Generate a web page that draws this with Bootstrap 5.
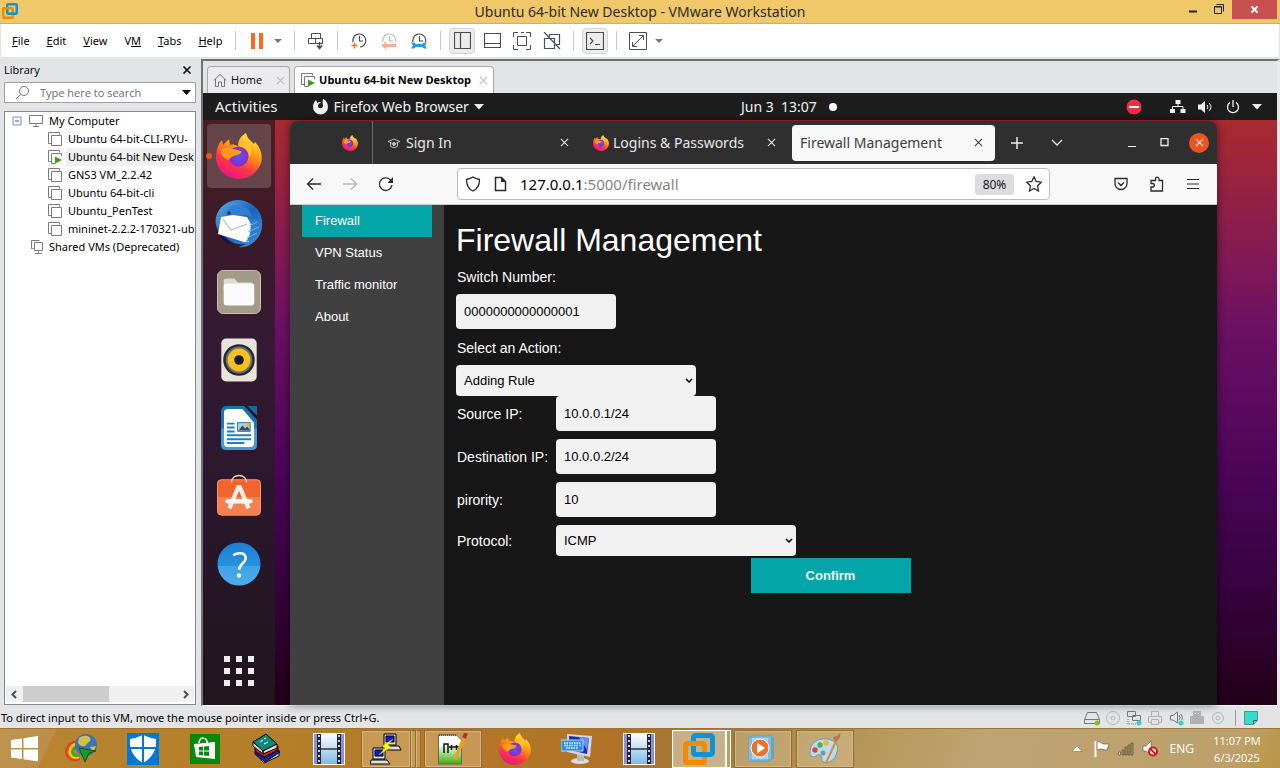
<!DOCTYPE html>
<html lang="en">
<head>
<meta charset="utf-8">
<meta name="viewport" content="width=device-width, initial-scale=1">
<title>Ubuntu 64-bit New Desktop - VMware Workstation</title>
<link href="https://cdn.jsdelivr.net/npm/bootstrap@5.3.0/dist/css/bootstrap.min.css" rel="stylesheet">
<style>
:root{--ui:"Open Sans","Noto Sans",sans-serif;--gnome:"Noto Sans","Open Sans",sans-serif;--web:"Liberation Sans",Arial,sans-serif}
body{font-family:var(--ui);font-size:11px;line-height:16px;color:#000;background:#e3e4e6}
button{border:0;background:none;padding:0;color:inherit;font:inherit}
svg{display:block;flex:none}
.shell{min-height:100vh}
.titlebar{height:24px;background:#f0c869;border-bottom:1px solid #cfae62;color:#2b2b2b;font:14px/23px var(--gnome)}
.win-btn{width:26px;height:19px}
.win-close{width:45px;height:19px;background:#c75050;margin-right:3px}
.menubar{height:34px;background:#fff;border:1px solid #e3e4e6;border-top:0;padding-left:11px;font-family:var(--gnome)}
.menu-item{margin-right:17px}
.menu-item.last{margin-right:7px}
.vsep{width:1px;height:19px;background:#c8c8c8;margin:0 6px}
.tool{width:30px;height:28px}
.tool.on{width:26px;height:26px;margin:0 2px;background:#ececed;border:1px solid #d4d4d4;border-radius:4px}
.caret{width:0;height:0;border:4px solid transparent;border-top-color:#777;border-bottom:0;margin:0 6px 0 2px}
.library{width:201px;padding:4px 5px 3px 4px}
.search-box{height:21px;border:1px solid #a0a0a0;background:#fff}
.search-box input{border:0;outline:0;min-width:0;font-size:11px;color:#6d6d6d;padding:0}
.search-box input::placeholder{color:#6d6d6d;opacity:1}
.tree{border:1px solid #828790;background:#fff;font-family:var(--gnome)}
.tree li{height:18px;white-space:nowrap}
.tree .guest{padding-left:43px}
.tree .nm{padding-left:2px;line-height:18px}
.tree .sel{background:#f0f0f0}
.twisty{margin:0 6px 0 7px}
.shared-icon{margin:0 6px 0 2px}
.hbar{height:16px;background:#f0f0f0;margin:0 1px 2px}
.hthumb{height:16px;width:46%;background:#cdcdcd}
.console{border-left:2px solid #6f7173;border-top:2px solid #6f7173;border-right:3px solid #e8e9ea;border-bottom:1px solid #fff;margin:1px 0 2px}
.vmtabs{height:32px;padding:5px 4px 0}
.vmtab{height:27px;border:1px solid #a8a8ac;border-bottom:0;border-radius:4px 4px 0 0;background:#ebebed;padding:0 4px 0 5px}
.vmtab .gap-name{margin:0 14px 0 4px}
.vmtab.on{background:#fff;font-weight:700;padding:0 5px 0 6px}
.topbar{height:27px;background:#1d1d1d;color:#f2f2f2;font:14px/27px var(--gnome);padding:0 15px 0 12px}
.activities{font-size:15px}
.app-menu{margin-left:34px;gap:5px}
.date-menu{margin-right:32px}
.indicators{gap:12px}
.desktop{background:linear-gradient(180deg,#aa2a2e 0,#8f1f49 16%,#6b1065 36%,#4a0456 62%,#3b0345 76%,#220018 100%)}
.dock{width:72px;background:linear-gradient(180deg,#4a1f23 0,#3c1a28 18%,#351a33 38%,#2a172c 65%,#21151d 100%);padding:4px 0 2px}
.dock-btn{width:64px;height:64px;margin-bottom:4px;border-radius:4px}
.dock-btn:last-child{margin-bottom:0}
.dock-btn.on{background:#65454a}
.run-dot{left:-1px;top:29px;width:6px;height:6px;border-radius:50%;background:#e95420}
.browser{margin:1px 60px 0 15px;border-radius:8px 8px 0 0;overflow:hidden;box-shadow:0 0 8px rgba(0,0,0,.5)}
.tabbar{height:43px;background:#302f30;color:#e8e8e8;font:14px/20px var(--gnome)}
.pin{width:83px;border-right:1px solid #6a696a;padding-right:14px;margin-right:1px}
.btab{flex:0 1 203px;height:36px;border-radius:4px;padding:0 8px;margin-left:4px}
.btab.on{background:#f8f8f8;color:#3d3d3d}
.wctl{gap:20px}
.quit{width:20px;height:20px;border-radius:50%;background:#e95420}
.navbar-ff{height:41px;background:#f8f8f8;border-bottom:1px solid #ccc;padding:0 6px;color:#2a2a2e}
.nb{width:36px;height:36px}
.urlbox{height:32px;border:1px solid #bcbcbc;border-radius:4px;background:#fff;margin:0 53px;padding:0 7px;gap:12px;font:15px/20px var(--gnome);color:#858585}
.zoom{height:21px;border-radius:3px;background:#dcdcde;font:12px/21px var(--gnome);color:#15141a;width:39px}
.page{background:#171717;color:#fff;font:14px/20px var(--web)}
.sidenav{width:154px;background:#404040;padding:0 12px;font-size:13px}
.sidenav a{height:32px;line-height:32px;padding-left:13px;color:#fff;text-decoration:none}
.sidenav a.on{background:#04a5a8}
.content-pane{padding:16px 12px}
.content-pane h1{font-size:32px;line-height:38px;margin:0 0 8px;font-weight:400}
.content-pane label{padding-left:1px}
.content-pane .top-label{display:block;margin-bottom:7px}
.fld{height:35px;width:160px;border:0;border-radius:4px;background:#f1f1f1;color:#000;font:13px/16px var(--web);padding:0 8px}
.switch-no{margin-bottom:9px}
select.fld{height:31px;width:240px;appearance:none;background:#f1f1f1 url("data:image/svg+xml,%3Csvg xmlns='http://www.w3.org/2000/svg' width='8' height='6'%3E%3Cpath d='M1 1l3 3 3-3' fill='none' stroke='%23000' stroke-width='1.5'/%3E%3C/svg%3E") no-repeat right 3px center}
.frow{margin-bottom:8px}
.frow.last{margin-bottom:2px}
.frow label{width:100px}
.confirm{width:160px;height:35px;background:#04a5a8;color:#f1f1f1;font:700 13px/35px var(--web)}
.statusbar{height:20px;padding:0 22px 0 1px;font-family:var(--gnome)}
.statusbar .vsep{height:16px;background:#999;margin:0 4px}
.taskbar{height:40px;color:#fff;border-top:1px solid #9d7434;background:linear-gradient(115deg,#bd9450 0,#bb8f48 50px,#b8842e 52px,#b47c28 340px,#b07228 570px,#9f7f40 660px,#b7995c 800px,#bda474 900px,#bda06a 1130px,#b9933f 1180px,#c59a30 1200px,#b98b28 100%)}
.start{width:50px}
.slot{width:62px;height:39px}
.tile{width:58px;height:38px;border:1px solid #8f6d34;box-shadow:inset 0 0 0 1px #d6b67e;background:rgba(255,235,200,.28)}
.tile.stack{width:50px}
.tile.focus-win{border-color:#fff;background:rgba(255,255,255,.4);width:54px}
.leaf{width:5px;height:38px;border:1px solid #8f6d34;border-left-color:#d6b67e;background:rgba(255,235,200,.28)}
.leaf.w{border-color:#fff}
.lang{font-size:12px;margin:0 12px 0 11px}
.clock{width:62px;line-height:17px;font-size:11px;margin-right:12px}
</style>
</head>
<body>
<svg width="0" height="0" class="position-absolute" aria-hidden="true">
<defs>
<linearGradient id="gFox" x1=".8" y1="0" x2=".3" y2="1"><stop offset="0" stop-color="#fff44f"/><stop offset=".4" stop-color="#ff980e"/><stop offset=".7" stop-color="#ff3647"/><stop offset="1" stop-color="#e31587"/></linearGradient>
<radialGradient id="gGlobe"><stop offset="0" stop-color="#5b56e8"/><stop offset="1" stop-color="#8a2bd0"/></radialGradient>
<linearGradient id="gBlue" x1="0" y1="0" x2="0" y2="1"><stop offset="0" stop-color="#1d7fd4"/><stop offset=".54" stop-color="#2790e0"/><stop offset=".55" stop-color="#3fa2e4"/><stop offset="1" stop-color="#4cacea"/></linearGradient>
<linearGradient id="gSky" x1="0" y1="0" x2="1" y2="1"><stop offset="0" stop-color="#5bb0ea"/><stop offset=".5" stop-color="#1b62bd"/><stop offset="1" stop-color="#3d9bdf"/></linearGradient>
<linearGradient id="gFilm" x1="0" y1="0" x2="0" y2="1"><stop offset="0" stop-color="#fff"/><stop offset="1" stop-color="#80b8e8"/></linearGradient>
<linearGradient id="gNote" x1="0" y1="0" x2="0" y2="1"><stop offset=".3" stop-color="#fff"/><stop offset="1" stop-color="#3fae10"/></linearGradient>
<symbol id="fox" viewBox="0 0 46 46"><path d="M30 0c1 5 5 8 8 11l1-2c6 6 8 14 6 21-3 9-12 16-22 16C10 46 0 36 0 24c0-6 2-13 6-17l1 5 6-6 1 6c3-1 5 0 8 1 0-6 3-10 8-13z" fill="url(#gFox)"/><circle cx="22.500" cy="23.500" r="10" fill="url(#gGlobe)"/><path d="M5 17c4-3 8-3 12-1 3 1 6 1 8 2 1 3-4 4-7 5-3 1-4 2-5 4-4-1-8-4-8-10z" fill="#ff9a1c"/><path d="M24 14c6 0 9 4 9 10 3-4 3-8 1-12-3-3-10-3-10 2z" fill="#ffc42a" opacity=".85"/></symbol>
<symbol id="vm" viewBox="0 0 14 14"><path d="M3.500 11.500H.5V.5H11.500v2M3.500 3.500h10v10h-10z" fill="none" stroke="#7b7b7b"/></symbol>
<symbol id="vmon" viewBox="0 0 14 14"><path d="M3.500 11.500H.5V.5H11.500v2M13.500 6V3.500h-10v10h4" fill="none" stroke="#7b7b7b"/><path d="M7 6.500v7l7-3.500z" fill="#3f9c12"/></symbol>
<symbol id="vmw" viewBox="0 0 32 32"><rect x="10.500" y="2.500" width="19" height="19" rx="2" fill="none" stroke="#0f93d2" stroke-width="5"/><rect x="2.500" y="10.500" width="19" height="19" rx="2" fill="none" stroke="#f38b00" stroke-width="5"/><path d="M15 21.500h12" fill="none" stroke="#0f93d2" stroke-width="5"/></symbol>
<symbol id="x10" viewBox="0 0 10 10"><path d="M1 1l8 8M9 1L1 9" fill="none" stroke="currentColor" stroke-width="1.200"/></symbol>
<symbol id="film" viewBox="0 0 32 32"><path d="M0 0h32v32H0z" fill="#fff"/><path d="M1 1h30v30H1z" fill="#8d8ee0"/><path d="M4 1h24v30H4z" fill="#26282c"/><path d="M8 1h16v30H8z" fill="url(#gFilm)"/><path d="M8 16h16" stroke="#333" stroke-width="1.500"/><path d="M6 2v29M26 2v29" stroke="#cfd4dc" stroke-width="2" stroke-dasharray="2 3"/></symbol>
<symbol id="clk" viewBox="0 0 18 18"><path d="M3.500 11.500A6.500 6.500 0 1 1 10 15M9.500 4v5H13" fill="none" stroke="currentColor" stroke-width="1.200"/></symbol>
</defs></svg>

<div class="shell d-flex flex-column">
<header class="titlebar position-relative text-center">
  <svg class="position-absolute" style="left:2px;top:3px" width="16" height="16"><use href="#vmw"/></svg>
  <span>Ubuntu 64-bit New Desktop - VMware Workstation</span>
  <div class="d-flex position-absolute end-0 top-0">
    <button class="win-btn d-flex justify-content-center" aria-label="Minimize"><svg width="10" height="14"><path d="M1 11.500h8" stroke="#222" stroke-width="2"/></svg></button>
    <button class="win-btn d-flex justify-content-center" aria-label="Restore"><svg width="12" height="15"><path d="M1.500 7v6.500h7v-7h-7zM1 7h8M3.500 4.500h7v7" fill="none" stroke="#222"/></svg></button>
    <button class="win-close d-flex justify-content-center align-items-center" aria-label="Close"><svg width="9" height="9"><path d="M1.500 1.500l6 6M7.500 1.500l-6 6" stroke="#fff" stroke-width="2"/></svg></button>
  </div>
</header>

<nav class="menubar d-flex align-items-center" aria-label="Menu">
  <button class="menu-item"><u>F</u>ile</button><button class="menu-item"><u>E</u>dit</button><button class="menu-item"><u>V</u>iew</button><button class="menu-item">V<u>M</u></button><button class="menu-item"><u>T</u>abs</button><button class="menu-item last"><u>H</u>elp</button>
  <span class="vsep"></span>
  <button class="tool d-flex justify-content-center align-items-center" aria-label="Suspend"><svg width="12" height="16"><path d="M0 0h4v16H0zM8 0h4v16H8z" fill="#ff6a1a"/></svg></button>
  <span class="caret"></span><span class="vsep"></span>
  <button class="tool d-flex justify-content-center align-items-center" aria-label="Send keys"><svg width="18" height="18" fill="none" stroke="#4c4c4c"><path d="M4.500 1.500h9v5h-9zM1.500 6.500h7v5h-7zM8.500 6.500h7v5h-7z"/><path d="M12.500 10v6M10 13.500l2.500 3 2.500-3" stroke-width="1.500"/></svg></button>
  <span class="vsep"></span>
  <button class="tool d-flex justify-content-center align-items-center" aria-label="Take snapshot"><svg width="18" height="18"><use href="#clk" color="#4c4c4c"/><path d="M4.500 10v7M1 13.500h7" stroke="#fff" stroke-width="4"/><path d="M4.500 10.500v6M1.500 13.500h6" stroke="#ff6a1a" stroke-width="1.300"/></svg></button>
  <button class="tool d-flex justify-content-center align-items-center" aria-label="Revert"><svg width="18" height="18"><use href="#clk" color="#bbb"/><path d="M0 10h17v7H0z" fill="#fff"/><path d="M1 13.500l5-4v2.500h10v3H6v2.500z" fill="#ffae8c"/></svg></button>
  <button class="tool d-flex justify-content-center align-items-center" aria-label="Manage snapshots"><svg width="18" height="18"><use href="#clk" color="#4c4c4c"/><path d="M0 10h18v8H0z" fill="#fff"/><path d="M1 10.500h3l2 1.500h6l2-1.500h3l-2 3 2 3h-3L12 15H6l-2 1.500H1l2-3z" fill="#2a9bdc"/></svg></button>
  <span class="vsep"></span>
  <button class="tool on d-flex justify-content-center align-items-center" aria-label="Show library"><svg width="17" height="17" fill="none" stroke="#4c4c4c"><path d="M.5.500h16v16H.5zM6.500.5v16" stroke-width="1.200"/></svg></button>
  <button class="tool d-flex justify-content-center align-items-center" aria-label="Thumbnail bar"><svg width="17" height="17" fill="none" stroke="#4c4c4c" stroke-width="1.200"><path d="M.5 1.500h16v14H.5zM.5 11.500h16"/></svg></button>
  <button class="tool d-flex justify-content-center align-items-center" aria-label="Full screen"><svg width="18" height="18" fill="none" stroke="#4c4c4c"><path d="M.5 5V.5H5M8 .5h3M13 .5h4.500V5M17.500 13v4.500H13M5 17.500H.5V13M4.500 4.500h9v9h-9z"/></svg></button>
  <button class="tool d-flex justify-content-center align-items-center" aria-label="Unity"><svg width="18" height="18" fill="none" stroke="#44525c"><path d="M6.500 5V2.500h10v10H13M1.500 6.500h10v10h-10zM1 0l16 17" stroke-width="1.200"/></svg></button>
  <span class="vsep"></span>
  <button class="tool on d-flex justify-content-center align-items-center" aria-label="Console view"><svg width="18" height="18" fill="none" stroke="#4c4c4c" stroke-width="1.200"><path d="M.5.500h17v17H.5zM4 6l3 3-3 3M9 12.500h5"/></svg></button>
  <span class="vsep"></span>
  <button class="tool d-flex justify-content-center align-items-center" aria-label="Stretch guest"><svg width="18" height="18" fill="none" stroke="#4c4c4c"><path d="M.5.500h17v17H.5zM4 14L14 4M10 3.500h4.500V8M3.500 10v4.500H8"/></svg></button>
  <span class="caret"></span>
</nav>

<div class="flex-fill d-flex">
  <aside class="library d-flex flex-column flex-shrink-0">
    <div class="d-flex justify-content-between align-items-center mb-1 pe-1"><span>Library</span><button aria-label="Close library"><svg width="10" height="10"><path d="M1.500 1.500l7 7M8.500 1.500l-7 7" stroke="#000" stroke-width="1.500"/></svg></button></div>
    <div class="search-box d-flex align-items-center">
      <svg class="mx-2" width="19" height="14" fill="none" stroke="#777"><circle cx="11" cy="5" r="4.500"/><path d="M7.500 8.500L3 13"/></svg>
      <input class="flex-fill" type="search" placeholder="Type here to search" aria-label="Search library">
      <svg class="me-1" width="9" height="6"><path d="M0 0h9L4.500 5z" fill="#000"/></svg>
    </div>
    <div class="tree mt-2 flex-fill d-flex flex-column">
      <ul class="list-unstyled mb-auto">
        <li class="d-flex align-items-center"><svg class="twisty" width="10" height="10"><path d="M1 1h8v8H1z" fill="#f4f6f8" stroke="#8a95a0"/><path d="M3 5h4" stroke="#3a57a0"/></svg><svg class="me-1" width="15" height="12" fill="none" stroke="#7b7b7b"><path d="M1.500.5h13v8h-13zM8 9v2M5 11.500h6"/></svg><span class="nm">My Computer</span></li>
        <li class="guest d-flex align-items-center"><svg class="me-1" width="14" height="14"><use href="#vm"/></svg><span class="nm">Ubuntu 64-bit-CLI-RYU-</span></li>
        <li class="guest d-flex align-items-center"><svg class="me-1" width="14" height="14"><use href="#vmon"/></svg><span class="nm sel flex-fill">Ubuntu 64-bit New Desk</span></li>
        <li class="guest d-flex align-items-center"><svg class="me-1" width="14" height="14"><use href="#vm"/></svg><span class="nm">GNS3 VM_2.2.42</span></li>
        <li class="guest d-flex align-items-center"><svg class="me-1" width="14" height="14"><use href="#vm"/></svg><span class="nm">Ubuntu 64-bit-cli</span></li>
        <li class="guest d-flex align-items-center"><svg class="me-1" width="14" height="14"><use href="#vm"/></svg><span class="nm">Ubuntu_PenTest</span></li>
        <li class="guest d-flex align-items-center"><svg class="me-1" width="14" height="14"><use href="#vm"/></svg><span class="nm">mininet-2.2.2-170321-ub</span></li>
        <li class="d-flex align-items-center ps-4"><svg class="shared-icon" width="12" height="14" fill="none" stroke="#7b7b7b"><path d="M2.500 8.500h-2v-8h8M3.500 2.500h8v8h-8zM7.500 11v2M4 13.500h7"/></svg><span class="nm ps-0">Shared VMs (Deprecated)</span></li>
      </ul>
      <div class="hbar d-flex align-items-center">
        <svg class="mx-1" width="9" height="9"><path d="M6 1L2.500 4.500 6 8" fill="none" stroke="#505050" stroke-width="2"/></svg><div class="hthumb"></div><svg class="ms-auto me-1" width="9" height="9"><path d="M3 1l3.500 3.500L3 8" fill="none" stroke="#505050" stroke-width="2"/></svg>
      </div>
    </div>
  </aside>

  <main class="console flex-fill d-flex flex-column">
    <div class="vmtabs d-flex">
      <button class="vmtab d-flex align-items-center"><svg width="14" height="14" fill="none" stroke="#777"><path d="M.7 7.500L7 1.500l6.300 6M2.500 6v7.500h3V9h3v4.500h3V6"/></svg><span class="gap-name">Home</span><svg width="9" height="9" color="#bbb"><use href="#x10"/></svg></button>
      <button class="vmtab on d-flex align-items-center ms-1"><svg width="14" height="14"><use href="#vmon"/></svg><span class="mx-1 pe-1">Ubuntu 64-bit New Desktop</span><svg width="9" height="9" color="#bbb"><use href="#x10"/></svg></button>
    </div>
    <div class="topbar d-flex align-items-center">
      <span class="me-auto d-flex align-items-center"><button class="activities">Activities</button>
      <button class="app-menu d-flex align-items-center"><svg width="17" height="17"><path d="M4 2l1.500 3C7 3.500 8 4 9 5c-2 0-3 1-3 3 0 3 5 3 5 0 0-2-1-3 0-7 3 1 5 4 5 8a7 7 0 0 1-15 0c0-3 1-5 3-7z" fill="#eee"/></svg><span>Firefox Web Browser</span><svg width="10" height="6"><path d="M0 0h10L5 5.500z" fill="#eee"/></svg></button></span>
      <button class="date-menu d-flex align-items-center"><span class="me-1">Jun 3&nbsp; 13:07</span><svg class="ms-2" width="8" height="8"><circle cx="4" cy="4" r="4" fill="#fff"/></svg></button>
      <span class="indicators ms-auto d-flex align-items-center">
        <svg class="me-3" width="16" height="16"><circle cx="8" cy="8" r="7.500" fill="#f22c45"/><path d="M3 8h10" stroke="#fff" stroke-width="2"/></svg>
        <svg width="16" height="14"><path d="M5.500 0h5v4h-5zM0 9h5v4H0zM10.500 9h5v4h-5z" fill="#f2f2f2"/><path d="M8 4v3M2.500 9V6.500h10.500V9" fill="none" stroke="#f2f2f2"/></svg>
        <svg width="16" height="14"><path d="M0 4.500h3L7 1v12L3 9.500H0z" fill="#f2f2f2"/><path d="M9 5q2 2 0 4M11 3q4 4 0 8" fill="none" stroke="#f2f2f2"/></svg>
        <svg width="14" height="14"><path d="M4 2.500a5.500 5.500 0 1 0 6 0M7 0v7" fill="none" stroke="#f2f2f2" stroke-width="1.300"/></svg>
        <svg width="10" height="6"><path d="M0 0h10L5 5.500z" fill="#eee"/></svg>
      </span>
    </div>
    <div class="desktop flex-fill d-flex">
      <div class="dock d-flex flex-column align-items-center flex-shrink-0">
        <button class="dock-btn on position-relative d-flex align-items-center justify-content-center" aria-label="Firefox"><span class="run-dot position-absolute"></span><svg width="46" height="48"><use href="#fox"/></svg></button>
        <button class="dock-btn d-flex align-items-center justify-content-center" aria-label="Thunderbird"><svg width="48" height="48" viewBox="0 0 48 48"><path d="M17 1c10-3 20 2 26 9 7 10 5 24-3 31-5 5-11 7-16 6l7-3c-6 1-12 0-19-5C3 34-2 24 2 14 5 7 10 3 17 1z" fill="url(#gSky)"/><path d="M9 17c3-9 9-12 18-11 6 1 9 6 10 12l-6-3z" fill="#2f7fd0"/><path d="M6 17l12-2 14 2 4 7-2 18-5 0L3 34z" fill="#fff"/><path d="M8 19l8 11 16-6" fill="none" stroke="#b9b9b9" stroke-width="1.200"/><path d="M33 18c5 5 4 15-2 24 10-3 15-11 15-21z" fill="#2f7ccc"/><path d="M34 26l8-4M33 32l11-5M32 38l10-5" stroke="#6bb9ee"/><path d="M4 35c3 6 8 8 13 9l-7-7z" fill="#17103f"/><circle cx="14" cy="13" r="1.500" fill="#222"/></svg></button>
        <button class="dock-btn d-flex align-items-center justify-content-center" aria-label="Files"><svg width="44" height="44" viewBox="0 0 46 46"><rect x=".5" y=".5" width="45" height="45" rx="6" fill="#a39a87" stroke="#cfc8b8"/><path d="M7 12q0-3 3-3h8l4 4h15v8H7z" fill="#dedad0"/><rect x="7" y="14" width="32" height="23" rx="3" fill="#fafafa"/></svg></button>
        <button class="dock-btn d-flex align-items-center justify-content-center" aria-label="Rhythmbox"><svg width="38" height="44" viewBox="0 0 38 46"><rect x=".5" y=".5" width="37" height="45" rx="5" fill="#e8e4dc"/><circle cx="19" cy="23" r="16.500" fill="#252a30"/><circle cx="19" cy="23" r="14" fill="#6a6f78"/><circle cx="19" cy="23" r="12" fill="#f5c01c"/><circle cx="19" cy="23" r="5" fill="#1c1c1e"/></svg></button>
        <button class="dock-btn d-flex align-items-center justify-content-center" aria-label="LibreOffice Writer"><svg width="36" height="44" viewBox="0 0 37 45"><rect width="37" height="45" rx="5" fill="#1a74ac"/><path d="M0 23h37v17q0 5-5 5H5q-5 0-5-5z" fill="#3f9bd0"/><path d="M3 7q0-4 4-4h15l12 14v21q0 4-4 4H7q-4 0-4-4z" fill="#fff"/><path d="M24 0h13v14z" fill="#21131f"/><path d="M27 0h10v10z" fill="#17689c"/><path d="M6 18h8M6 22h8M6 26h8M6 30h25M6 34h25M6 38h18" stroke="#1d7fc0" stroke-width="2"/><path d="M17 17h13v9H17z" fill="#9fd2f0" stroke="#1d7fc0"/><path d="M18 25l4-5 3 3 2-2 3 4z" fill="#444"/><circle cx="28" cy="19" r="1.800" fill="#f3b900"/></svg></button>
        <button class="dock-btn d-flex align-items-center justify-content-center" aria-label="Software"><svg width="44" height="44" viewBox="0 3 46 44"><rect x=".5" y="8" width="45" height="37" rx="4" fill="#f0642d" stroke="#f9a27c"/><path d="M1 26h44v15q0 4-4 4H5q-4 0-4-4z" fill="#f58050"/><path d="M15 11c0-10 16-10 16 0" fill="none" stroke="#f6d9a2" stroke-width="1.500"/><path d="M13 38l9-22h2l9 22" fill="none" stroke="#fbeee8" stroke-width="4.500"/><path d="M11 30.500h24" stroke="#fff" stroke-width="4.500" stroke-linecap="round"/></svg></button>
        <button class="dock-btn d-flex align-items-center justify-content-center" aria-label="Help"><svg width="44" height="44" viewBox="0 0 46 46"><circle cx="23" cy="23" r="22.500" fill="url(#gBlue)"/><path d="M17 14c3-3 13-4 13 3 0 5-7 6-7 12" fill="none" stroke="#fff" stroke-width="2.700"/><circle cx="23" cy="35" r="2.300" fill="#fff"/></svg></button>
        <button class="dock-btn d-flex align-items-center justify-content-center mt-auto" aria-label="Show applications"><svg width="30" height="30" fill="#eee"><path d="M0 0h6v6H0zM12 0h6v6h-6zM24 0h6v6h-6zM0 12h6v6H0zM12 12h6v6h-6zM24 12h6v6h-6zM0 24h6v6H0zM12 24h6v6h-6zM24 24h6v6h-6z"/></svg></button>
      </div>

      <div class="browser flex-fill d-flex flex-column">
        <div class="tabbar d-flex align-items-center">
          <button class="pin h-100 d-flex align-items-center justify-content-end flex-shrink-0" aria-label="Pinned tab"><svg width="16" height="16"><use href="#fox"/></svg></button>
          <button class="btab d-flex align-items-center"><svg width="16" height="16" fill="none" stroke="#bbb"><path d="M2 6.500L8 4l6 2.500L8 9zM4.500 8v3.500q3.500 2.500 7 0V8"/><circle cx="8" cy="9" r="1.500" fill="#bbb"/></svg><span class="ms-1 me-auto">Sign In</span><svg class="me-1" width="9" height="9"><use href="#x10"/></svg></button>
          <button class="btab d-flex align-items-center"><svg width="16" height="16"><use href="#fox"/></svg><span class="ms-1 me-auto">Logins &amp; Passwords</span><svg class="me-1" width="9" height="9"><use href="#x10"/></svg></button>
          <button class="btab on d-flex align-items-center"><span class="me-auto">Firewall Management</span><svg class="me-1" width="9" height="9"><use href="#x10"/></svg></button>
          <button class="ms-3" aria-label="New tab"><svg width="12" height="12"><path d="M6 0v12M0 6h12" stroke="#eee" stroke-width="1.500"/></svg></button>
          <button class="ms-4 ps-1" aria-label="List tabs"><svg width="12" height="8"><path d="M1 1l5 5 5-5" fill="none" stroke="#eee" stroke-width="1.300"/></svg></button>
          <div class="wctl ms-auto me-2 d-flex align-items-center">
            <button class="me-1" aria-label="Minimize"><svg width="8" height="10"><path d="M0 8.500h8" stroke="#eee"/></svg></button>
            <button aria-label="Maximize"><svg width="9" height="9"><path d="M1 .5h7v7H1z" fill="none" stroke="#eee" stroke-width="1.300"/></svg></button>
            <button class="quit d-flex align-items-center justify-content-center" aria-label="Close"><svg width="9" height="9" color="#fff"><use href="#x10"/></svg></button>
          </div>
        </div>
        <div class="navbar-ff d-flex align-items-center">
          <button class="nb d-flex align-items-center justify-content-center" aria-label="Back"><svg width="16" height="14"><path d="M15 7H1.500M7 1.500L1.500 7 7 12.500" fill="none" stroke="#2a2a2e" stroke-width="1.300"/></svg></button>
          <button class="nb d-flex align-items-center justify-content-center" aria-label="Forward"><svg width="16" height="14"><path d="M1 7h13.500M9 1.500L14.500 7 9 12.500" fill="none" stroke="#b5b5b7" stroke-width="1.300"/></svg></button>
          <button class="nb d-flex align-items-center justify-content-center" aria-label="Reload"><svg width="16" height="16"><path d="M14 9a6.300 6.300 0 1 1-2-5.500l1.500 1.500" fill="none" stroke="#2a2a2e" stroke-width="1.300"/><path d="M15 1v6H9.500z" fill="#2a2a2e"/></svg></button>
          <div class="urlbox flex-fill d-flex align-items-center">
            <svg width="16" height="16"><path d="M8 1c2 1.500 4 2 6.500 2.500 0 6-2 9.500-6.500 11.500-4.500-2-6.500-5.500-6.500-11.500C4 3 6 2.500 8 1z" fill="none" stroke="#2a2a2e" stroke-width="1.300"/></svg>
            <svg width="15" height="16"><path d="M2.500 1.500h6l4 4v9h-10z" fill="none" stroke="#2a2a2e" stroke-width="1.500"/><path d="M8 1v5h5z" fill="#2a2a2e"/></svg>
            <a class="me-auto text-reset text-decoration-none" href="#"><span class="text-black">127.0.0.1</span>:5000/firewall</a>
            <button class="zoom">80%</button>
            <svg width="16" height="16"><path d="M8 .8l2.200 4.700 5.100.7-3.700 3.600.9 5.200L8 12.500 3.500 15l.9-5.200L.7 6.200l5.100-.7z" fill="none" stroke="#2a2a2e" stroke-width="1.300"/></svg>
          </div>
          <button class="nb d-flex align-items-center justify-content-center" aria-label="Pocket"><svg width="14" height="14"><path d="M1 1.500h12v5a6 6 0 0 1-12 0zM4 5.500l3 3 3-3" fill="none" stroke="#2a2a2e" stroke-width="1.300"/></svg></button>
          <button class="nb d-flex align-items-center justify-content-center" aria-label="Extensions"><svg width="16" height="16"><path d="M2 15V11h1.500c2.500 0 2.500-3.500 0-3.500H2V4.500h4.500V3c0-2.500 3.500-2.500 3.500 0v1.500h3.500V15z" fill="none" stroke="#2a2a2e" stroke-width="1.300"/></svg></button>
          <button class="nb d-flex align-items-center justify-content-center" aria-label="Menu"><svg width="12" height="12"><path d="M0 1.500h12M0 6h12M0 10.500h12" stroke="#2a2a2e" stroke-width="1.200"/></svg></button>
        </div>
        <div class="page flex-fill d-flex">
          <nav class="sidenav d-flex flex-column flex-shrink-0"><a class="on" href="#">Firewall</a><a href="#">VPN Status</a><a href="#">Traffic monitor</a><a href="#">About</a></nav>
          <form class="content-pane flex-fill">
            <h1>Firewall Management</h1>
            <label class="top-label" for="sw">Switch Number:</label>
            <input class="fld switch-no d-block" id="sw" value="0000000000000001">
            <label class="top-label" for="act">Select an Action:</label>
            <select class="fld d-block" id="act"><option>Adding Rule</option></select>
            <div class="frow d-flex align-items-center"><label for="src">Source IP:</label><input class="fld" id="src" value="10.0.0.1/24"></div>
            <div class="frow d-flex align-items-center"><label for="dst">Destination IP:</label><input class="fld" id="dst" value="10.0.0.2/24"></div>
            <div class="frow d-flex align-items-center"><label for="pri">pirority:</label><input class="fld" id="pri" value="10"></div>
            <div class="frow last d-flex align-items-center"><label for="pro">Protocol:</label><select class="fld" id="pro"><option>ICMP</option></select></div>
            <button type="button" class="confirm d-block mx-auto">Confirm</button>
          </form>
        </div>
      </div>
    </div>
  </main>
</div>

<footer class="statusbar d-flex align-items-center">
  <span class="me-auto">To direct input to this VM, move the mouse pointer inside or press Ctrl+G.</span>
  <div class="d-flex align-items-center gap-1">
    <svg width="17" height="16" fill="none" stroke="#777"><path d="M3.500 2.500h9l3 7v4H.5v-4zM.5 9.500h15"/><circle cx="13" cy="13" r="2.500" fill="#7ac520" stroke="none"/></svg>
    <svg width="17" height="16" fill="none" stroke="#b5b5b5"><circle cx="8" cy="8" r="6.500"/><circle cx="8" cy="8" r="2"/></svg>
    <svg width="17" height="16" fill="none" stroke="#777"><path d="M1.500 1.500h8v5h-8zM6.500 5.500h8v5h-8z"/><path d="M2 9v5h8" stroke-dasharray="1 1"/><circle cx="13" cy="13" r="2.500" fill="#30d5c0" stroke="none"/></svg>
    <svg width="17" height="16" fill="none" stroke="#b0b0b0"><path d="M4.500 6V1.500h7V6M4 12.500H1.500V6.500h13v6H12M4.500 9.500h7v5h-7z"/></svg>
    <svg width="17" height="16" fill="none" stroke="#777"><path d="M2.500 5.500H5L9.500 2v11L5 10H2.500zM11 5q2 3 0 5M13 4q2 3 1 6"/><circle cx="13" cy="13" r="2.500" fill="#30d5c0" stroke="none"/></svg>
    <svg width="17" height="16" fill="#b0b0b0"><path d="M1 6h14v8H1zM4 1h8v5H4z"/><path d="M6 3h1v1H6zM9 3h1v1H9z" fill="#fff"/></svg>
    <svg width="17" height="16" fill="none" stroke="#b5b5b5"><circle cx="8" cy="8" r="5.500"/><circle cx="8" cy="8" r="2"/></svg>
    <span class="vsep"></span>
    <svg width="14" height="14"><path d="M.5.500h13v9l-4 4H.5z" fill="#35dccb" stroke="#5a8f8a"/><path d="M13 9.500H9.500V13" fill="none" stroke="#267"/></svg>
  </div>
</footer>

<div class="taskbar d-flex align-items-center">
  <button class="start d-flex align-items-center justify-content-center" aria-label="Start"><svg width="28" height="26" fill="#fff"><path d="M0 4l11-1.500V12H0zM12.500 2.300L27 0v12H12.500zM0 13.500h11V23L0 21.500zM12.500 13.500H27v12l-14.500-2.300z"/></svg></button>
  <button class="slot d-flex align-items-center justify-content-center" aria-label="Download manager"><svg width="32" height="32"><path d="M14 9C3 7-1 18 3 24c3 4 9 4 12 2" fill="none" stroke="#e33" stroke-width="2"/><path d="M14 11C6 10 3 18 6 22c2 3 6 3 8 2" fill="none" stroke="#fc0" stroke-width="2.500"/><path d="M14 14c-5 0-8 5-6 7 2 2 5 2 7 1" fill="none" stroke="#3a3" stroke-width="2.500"/><circle cx="21" cy="12" r="11" fill="#3b72b8"/><path d="M14 5c4-3 9-3 11 0s-2 4-4 7-7 0-8-2zM25 14l6-1-3 7z" fill="#cfc24a"/><path d="M14 15l17 3-7 2-4 9z" fill="#1f9a22" stroke="#0c5a10"/></svg></button>
  <button class="slot d-flex align-items-center justify-content-center" aria-label="Defender"><svg width="32" height="32"><path d="M0 0h32v32H0z" fill="#0078d7"/><path d="M3 6l5-1 8-3 8 3 5 1c1 11-4 19-13 24C7 25 2 17 3 6z" fill="#fff"/><path d="M16 1v30M2 15h28" stroke="#0078d7" stroke-width="2"/></svg></button>
  <button class="slot d-flex align-items-center justify-content-center" aria-label="Store"><svg width="30" height="30"><path d="M0 0h30v30H0z" fill="#078a07"/><path d="M4 10l21-2v17L6 23z" fill="#fff"/><path d="M9 9c0-7 9-6 8 0" fill="none" stroke="#fff" stroke-width="1.500"/><path d="M9 13l4-.5v4H9zM14 12.400l5-.5v4.600h-5zM9 17.500h4v4l-4-.5zM14 17.500h5V22l-5-.5z" fill="#078a07"/></svg></button>
  <button class="slot d-flex align-items-center justify-content-center" aria-label="Library books"><svg width="30" height="32"><path d="M4 21l8 9 15-7v-5L12 24z" fill="#fff" stroke="#000"/><path d="M3 18l10 7 14-8v3l-14 9L3 21z" fill="#1a22c8" stroke="#000"/><path d="M3 14l9 6 14-7v4l-14 7-9-6z" fill="#e02020" stroke="#000"/><path d="M1 9l13-8 11 10-14 7z" fill="#0c8a80" stroke="#000"/><path d="M1 9v4l10 8v-3zM11 18l14-7v4l-14 6z" fill="#ddd" stroke="#000"/><path d="M8 9l3-2M12 11l4-2M12 6l2-1" stroke="#fff"/></svg></button>
  <button class="slot d-flex align-items-center justify-content-center" aria-label="Video"><svg width="32" height="32"><use href="#film"/></svg></button>
  <div class="slot d-flex align-items-center justify-content-center"><button class="tile stack d-flex align-items-center justify-content-center" aria-label="PuTTY"><svg width="32" height="32" stroke="#000"><path d="M14 1h12v11H14zM12 13h17l2 4H14z" fill="#ddd"/><path d="M16 3h8v6h-8z" fill="#1018e0"/><path d="M3 15h12v11H3zM1 27h16l3 4H0z" fill="#ddd"/><path d="M5 17h8v6H5z" fill="#1018e0"/><path d="M23 6L12 13l3 2-6 7 12-8-3-2z" fill="#ff0" stroke="#aa0" stroke-width=".5"/></svg></button><span class="leaf"></span><span class="leaf"></span></div>
  <div class="slot d-flex align-items-center justify-content-center"><button class="tile d-flex align-items-center justify-content-center" aria-label="Notepad++"><svg width="32" height="32"><path d="M1.500 2h18l5 5v24h-23z" fill="url(#gNote)" stroke="#666"/><path d="M2 2h18" stroke="#555" stroke-width="2" stroke-dasharray="1 1"/><path d="M7 20v-9h4v9M12 14h5M14.500 12v5M17 14h5M19.500 12v5" fill="none" stroke="#111" stroke-width="1.500"/><path d="M28 3L18 26" stroke="#e8a21c" stroke-width="3.500"/><path d="M29 0l-2 5" stroke="#b03030" stroke-width="4"/></svg></button></div>
  <button class="slot d-flex align-items-center justify-content-center" aria-label="Firefox"><svg width="32" height="32"><use href="#fox"/></svg></button>
  <button class="slot d-flex align-items-center justify-content-center" aria-label="On-screen keyboard"><svg width="32" height="32"><ellipse cx="19" cy="28" rx="9" ry="3" fill="#ddd"/><path d="M16 20h7v8h-7z" fill="#bbb"/><path d="M6 1l25 2-2 21-23-5z" fill="#d5d8dc"/><path d="M8 3l20 2-2 16-18-4z" fill="#1530c0"/><path d="M18 4l10 1-2 12z" fill="#6a8df0"/><path d="M0 7h22v11H0z" fill="#2d8ddc" stroke="#b8dcf8"/><path d="M3 10h17M3 12.500h17M5 15h12" stroke="#fff" stroke-width="1.500" stroke-dasharray="1.500 1"/></svg></button>
  <button class="slot d-flex align-items-center justify-content-center" aria-label="Video"><svg width="32" height="32"><use href="#film"/></svg></button>
  <div class="slot d-flex align-items-center justify-content-center"><button class="tile focus-win d-flex align-items-center justify-content-center" aria-label="VMware Workstation"><svg width="32" height="32"><use href="#vmw"/></svg></button><span class="leaf w"></span></div>
  <div class="slot d-flex align-items-center justify-content-center"><button class="tile d-flex align-items-center justify-content-center" aria-label="Media player"><svg width="30" height="28"><path d="M6 2h20v22H6z" fill="#5fa6cc"/><path d="M3 1h20v24H3zM1 2h20v24H1z" fill="#a9d6ec" stroke="#5f9fc4"/><circle cx="12" cy="13" r="9" fill="#f0702a" stroke="#fff"/><path d="M9 7.500v11l8-5.500z" fill="#fff"/></svg></button></div>
  <div class="slot d-flex align-items-center justify-content-center"><button class="tile d-flex align-items-center justify-content-center" aria-label="Paint"><svg width="32" height="32"><path d="M1 22C0 10 8 5 18 6c8 1 12 6 10 13-2 8-8 12-13 10-4-2 0-5-4-7s-4 5-10 0z" fill="#b5dcf0" stroke="#6a9cba"/><circle cx="6" cy="17" r="2.700" fill="#e04040"/><circle cx="11" cy="12" r="2.700" fill="#50b040"/><circle cx="17" cy="10" r="2.700" fill="#f0b820"/><circle cx="14" cy="20" r="2.500" fill="#7890a8"/><path d="M27 8L17 30" stroke="#e08a30" stroke-width="2"/><path d="M26 9l-2-5q4 0 7-4 2 5-5 9z" fill="#b07a4a"/></svg></button></div>
  <div class="ms-auto d-flex align-items-center">
    <svg class="me-2" width="10" height="6"><path d="M0 5.500h10L5 0z" fill="#fff" stroke="#6b5a3a" stroke-width=".5"/></svg>
    <svg class="ms-1 me-2" width="16" height="16"><path d="M1.500 0v16" stroke="#fff" stroke-width="2"/><path d="M3 1c4-1 4 2 7 2h5l-2 6c-4 0-5-2-10 0z" fill="#fff" stroke="#5c4a2a" stroke-width=".6"/></svg>
    <svg class="me-2" width="16" height="14" stroke="#5c4a2a" stroke-width=".7"><path d="M.5 10h2v3h-2z" fill="#fff"/><path d="M4 8h2v5H4zM7 5h2v8H7zM10 3h2v10h-2zM13 1h2v12h-2z" fill="#a89878"/></svg>
    <svg width="17" height="16"><path d="M1 5h3l5-5v14l-5-4H1z" fill="#fff" stroke="#5c4a2a" stroke-width=".6"/><circle cx="11" cy="10.500" r="4" fill="#fff" stroke="#d8141c" stroke-width="2"/><path d="M8.500 8l5 5" stroke="#d8141c" stroke-width="2"/></svg>
    <span class="lang">ENG</span>
    <div class="clock text-center">11:07 PM<br>6/3/2025</div>
  </div>
</div>
</div>
<script src="https://cdn.jsdelivr.net/npm/bootstrap@5.3.0/dist/js/bootstrap.bundle.min.js"></script>
</body>
</html>
